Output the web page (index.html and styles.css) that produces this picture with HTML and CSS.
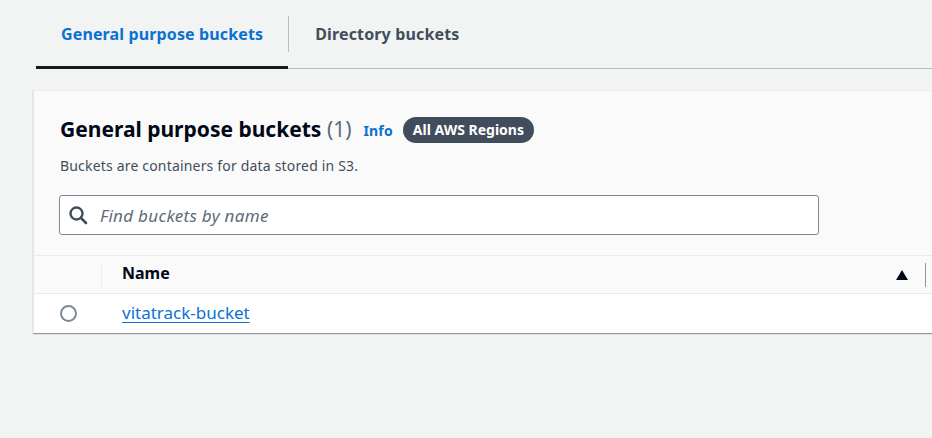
FILE: index.html
```html
<!DOCTYPE html>
<html lang="en">
<head>
<meta charset="utf-8">
<title>S3 buckets</title>
<link rel="stylesheet" href="styles.css">
</head>
<body>
<div class="page">
  <nav class="tabs">
    <a class="tab active">General purpose buckets</a>
    <span class="tab-divider"></span>
    <a class="tab">Directory buckets</a>
  </nav>
  <section class="card">
    <header class="card-header">
      <div class="title-row">
        <h2 class="title">General purpose buckets <span class="count">(1)</span></h2>
        <a class="info">Info</a>
        <span class="badge">All AWS Regions</span>
      </div>
      <p class="desc">Buckets are containers for data stored in S3.</p>
      <label class="search">
        <svg class="search-icon" width="20" height="20" viewBox="0 0 20 20" aria-hidden="true">
          <circle cx="8.5" cy="8.5" r="6" fill="none" stroke="#414d5c" stroke-width="2.4"/>
          <path d="M13 13 L18 18" stroke="#414d5c" stroke-width="2.6" stroke-linecap="round"/>
        </svg>
        <span class="placeholder">Find buckets by name</span>
      </label>
    </header>
    <div class="table">
      <div class="thead">
        <div class="cell-select"></div>
        <div class="col-divider"></div>
        <div class="th-name">Name</div>
        <svg class="sort" width="12" height="10" viewBox="0 0 12 10" aria-hidden="true"><path d="M6 0 L12 10 L0 10 Z" fill="#000716"/></svg>
        <div class="col-divider dark"></div>
      </div>
      <div class="trow">
        <div class="cell-select"><span class="radio"></span></div>
        <div class="td-name"><a class="link">vitatrack-bucket</a></div>
      </div>
    </div>
  </section>
</div>
</body>
</html>
```

FILE: styles.css
```css
html, body {
  margin: 0;
  padding: 0;
  background: #f2f3f3;
  overflow: hidden;
}
body {
  font-family: "Noto Sans", "Open Sans", sans-serif;
  color: #000716;
  width: 932px;
  height: 438px;
}
.tabs {
  display: flex;
  align-items: stretch;
  height: 68px;
  margin-left: 36px;
  border-bottom: 1px solid #b6bec9;
}
.tab {
  display: flex;
  align-items: center;
  padding: 0 25px;
  font-size: 16px;
  letter-spacing: 0.13px;
  font-weight: 700;
  color: #414d5c;
  position: relative;
  cursor: pointer;
}
.tab.active {
  color: #0972d3;
}
.tab.active::after {
  content: "";
  position: absolute;
  left: 0;
  right: 0;
  bottom: -1px;
  height: 3px;
  background: #16191f;
}
.tab + .tab-divider + .tab {
  padding-left: 26px;
  letter-spacing: 0.15px;
}
.tab-divider {
  width: 1px;
  height: 36px;
  align-self: center;
  background: #b6bec9;
}
.card {
  margin: 21px -40px 0 33px;
  background: #fafafa;
  border-top: 1px solid #eaeded;
  border-left: 1px solid #e4e6e8;
  box-shadow: 0 1px 1px 0 rgba(0, 28, 36, 0.3), 1px 1px 1px 0 rgba(0, 28, 36, 0.15);
}
.card-header {
  padding: 26px 0 20px 26px;
}
.title-row {
  display: flex;
  align-items: center;
  height: 26px;
}
.title {
  margin: 0;
  font-size: 21px;
  line-height: 24px;
  font-weight: 700;
  color: #000716;
  margin-top: -3px;
}
.count {
  font-weight: 400;
  color: #5f6b7a;
}
.info {
  margin-left: 12px;
  font-size: 14px;
  letter-spacing: 0.15px;
  font-weight: 700;
  color: #0972d3;
}
.badge {
  margin-left: 10px;
  height: 26px;
  line-height: 26px;
  padding: 0 10px;
  border-radius: 13px;
  background: #414d5c;
  color: #ffffff;
  font-size: 14px;
  font-weight: 700;
}
.desc {
  margin: 13px 0 0 0;
  font-size: 14px;
  letter-spacing: 0.18px;
  line-height: 20px;
  color: #414d5c;
}
.search {
  display: flex;
  align-items: center;
  box-sizing: border-box;
  margin: 19px 0 0 -1px;
  width: 760px;
  height: 40px;
  background: #ffffff;
  border: 1px solid #7d8998;
  border-radius: 3px;
}
.search-icon {
  margin-left: 8px;
}
.placeholder {
  margin-left: 12px;
  font-size: 17px;
  letter-spacing: 0.3px;
  font-style: italic;
  color: #5f6b7a;
}
.table {
  border-top: 1px solid #e9ebed;
}
.thead {
  display: flex;
  align-items: center;
  height: 37px;
  background: #fafafa;
  border-bottom: 1px solid #e9ebed;
}
.cell-select {
  width: 67px;
  display: flex;
  align-items: center;
  justify-content: flex-start;
}
.col-divider {
  width: 1px;
  height: 25px;
  background: #e9ebed;
}
.col-divider.dark {
  background: #8c95a0;
  margin-left: 17px;
  height: 24px;
}
.th-name {
  flex: 0 0 774px;
  padding-left: 20px;
  font-size: 16px;
  line-height: 20px;
  margin-top: -3px;
  font-weight: 700;
  color: #000716;
}
.sort {
  display: block;
}
.trow {
  display: flex;
  align-items: center;
  height: 39px;
  background: #ffffff;
}
.radio {
  box-sizing: border-box;
  width: 17px;
  height: 17px;
  margin-left: 26px;
  border: 2px solid #7d8998;
  border-radius: 50%;
}
.td-name {
  padding-left: 21px;
  margin-top: -2px;
}
.link {
  font-size: 17px;
  color: #0972d3;
  text-decoration: underline;
  text-underline-offset: 3px;
  text-decoration-thickness: 1px;
}
```
